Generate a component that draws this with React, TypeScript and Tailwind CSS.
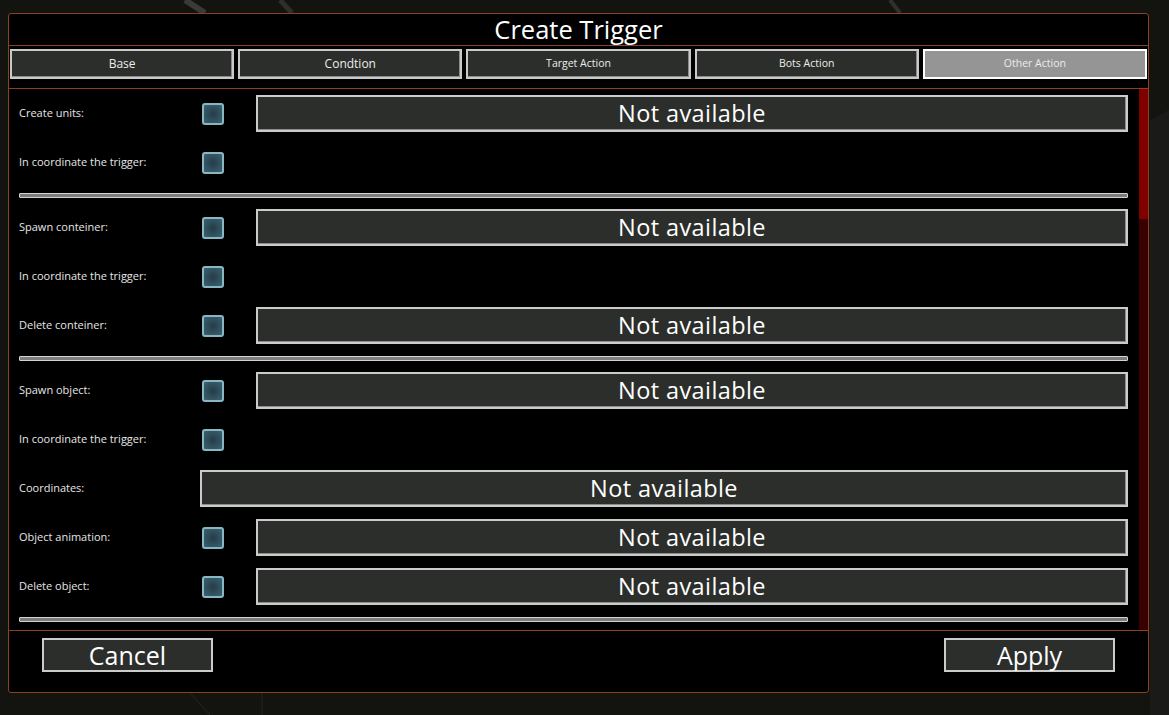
import React from "react"

type Row =
  | { kind: "row"; label: string; check?: boolean; box?: "short" | "wide" }
  | { kind: "divider" }

const rows: Row[] = [
  { kind: "row", label: "Create units:", check: true, box: "short" },
  { kind: "row", label: "In coordinate the trigger:", check: true },
  { kind: "divider" },
  { kind: "row", label: "Spawn conteiner:", check: true, box: "short" },
  { kind: "row", label: "In coordinate the trigger:", check: true },
  { kind: "row", label: "Delete conteiner:", check: true, box: "short" },
  { kind: "divider" },
  { kind: "row", label: "Spawn object:", check: true, box: "short" },
  { kind: "row", label: "In coordinate the trigger:", check: true },
  { kind: "row", label: "Coordinates:", box: "wide" },
  { kind: "row", label: "Object animation:", check: true, box: "short" },
  { kind: "row", label: "Delete object:", check: true, box: "short" },
  { kind: "divider" }
]

const tabs = [
  { name: "Base", size: "text-[12px]" },
  { name: "Condtion", size: "text-[12px]" },
  { name: "Target Action", size: "text-[10.5px]" },
  { name: "Bots Action", size: "text-[10.5px]" },
  { name: "Other Action", size: "text-[10.5px]", active: true }
]

const font = { fontFamily: '"Open Sans", "Noto Sans", sans-serif' }

const Checkbox = () => (
  <div className="w-[22px] h-[22px] shrink-0 rounded-[3px] border-2 border-[#88b7c4] bg-[radial-gradient(circle,#243c48,#3d6271)]" />
)

const NotAvailable = () => (
  <div className="flex-1 h-[37px] flex items-center justify-center border-2 border-[#cbcbcb] bg-[#2c2e2b] shadow-[inset_-1px_-1px_0_#8c8c8c] text-white text-[23.5px] font-medium tracking-[0.4px]">
    Not available
  </div>
)

export default function App() {
  return (
    <div
      className="relative w-full h-[715px] bg-[#131310] overflow-hidden"
      style={font}
    >
      <svg
        className="absolute inset-0"
        width="1169"
        height="715"
        viewBox="0 0 1169 715"
      >
        <path d="M185 0 L205 13" stroke="#3a3a38" strokeWidth="6" fill="none" />
        <path d="M280 0 L292 13" stroke="#2e2e2c" strokeWidth="5" fill="none" />
        <path d="M890 0 L900 13" stroke="#303030" strokeWidth="4" fill="none" />
        <path d="M1150 120 L1169 110 L1169 715 L1150 715 Z" fill="#1a1a18" />
        <path d="M190 693 L210 715" stroke="#252522" strokeWidth="1" fill="none" />
        <path d="M262 693 L262 715" stroke="#252522" strokeWidth="1" fill="none" />
      </svg>

      <div className="relative pt-[13px] pl-[8px]">
        <div className="w-[1141px] h-[680px] flex flex-col border border-[#8a4220] rounded-[3px] bg-black">
          {/* title */}
          <div className="h-[32px] shrink-0 flex items-center justify-center border-b border-[#8a4220] text-white text-[25.5px]">
            Create Trigger
          </div>

          {/* tabs */}
          <div className="h-[43px] shrink-0 flex gap-[4px] pl-[1px] pr-[1px] pt-[3px] border-b border-[#8a4220]">
            {tabs.map((t) =>
              t.active ? (
                <div
                  key={t.name}
                  className={`flex-1 h-[30px] flex items-center justify-center border-2 border-white bg-[#959595] text-[#ececec] ${t.size}`}
                >
                  {t.name}
                </div>
              ) : (
                <div
                  key={t.name}
                  className={`flex-1 h-[30px] flex items-center justify-center border-2 border-[#c9c9c9] bg-[#2c2e2b] shadow-[inset_-1px_-1px_0_#8c8c8c] text-[#ececec] ${t.size}`}
                >
                  {t.name}
                </div>
              )
            )}
          </div>

          {/* content */}
          <div className="h-[542px] shrink-0 flex border-b border-[#8a4220]">
            <div className="flex-1 flex flex-col pl-[10px] pr-[11px]">
              {rows.map((r, i) =>
                r.kind === "divider" ? (
                  <div key={i} className="h-[16px] flex items-center">
                    <div className="w-full h-[5px] rounded-[1px] border border-[#d2d2d2] bg-[#7c7c7c]" />
                  </div>
                ) : (
                  <div key={i} className="h-[49px] flex items-center">
                    <div
                      className={`${
                        r.check ? "w-[183px]" : "w-[181px]"
                      } shrink-0 text-[11px] text-[#e6e6e6]`}
                    >
                      {r.label}
                    </div>
                    {r.check && <Checkbox />}
                    {r.box === "short" && (
                      <>
                        <div className="w-[32px] shrink-0" />
                        <NotAvailable />
                      </>
                    )}
                    {r.box === "wide" && <NotAvailable />}
                  </div>
                )
              )}
            </div>
            <div className="w-[9px] shrink-0 flex flex-col bg-[#3a0000]">
              <div className="h-[130px] bg-[#800000]" />
            </div>
          </div>

          {/* footer */}
          <div className="flex-1 flex justify-between items-start pt-[7px] pl-[33px] pr-[33px]">
            <button className="w-[171px] h-[34px] flex items-center justify-center border-2 border-[#cbcbcb] bg-[#2c2e2b] text-white text-[25px] leading-none">
              Cancel
            </button>
            <button className="w-[171px] h-[34px] flex items-center justify-center border-2 border-[#cbcbcb] bg-[#2c2e2b] text-white text-[25px] leading-none">
              Apply
            </button>
          </div>
        </div>
      </div>
    </div>
  )
}
